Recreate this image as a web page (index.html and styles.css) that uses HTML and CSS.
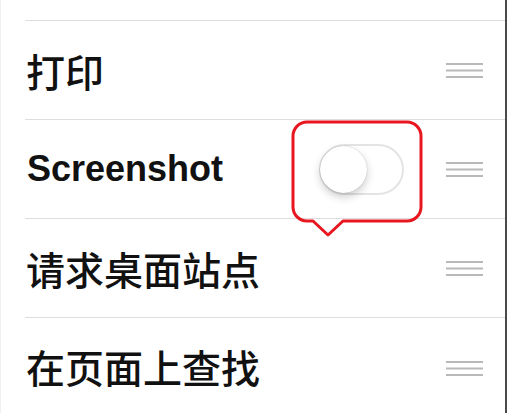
FILE: index.html
```html
<!DOCTYPE html>
<html lang="zh">
<head>
<meta charset="utf-8">
<link rel="stylesheet" href="styles.css">
</head>
<body>
<div class="screen">
  <div class="top"></div>
  <div class="row">
    <span class="label cjk">打印</span>
    <svg class="handle" width="37" height="15" viewBox="0 0 37 15"><path d="M0 1H37M0 7.5H37M0 14H37" stroke="#b9b9b9" stroke-width="1.8"/></svg>
  </div>
  <div class="row">
    <span class="label latin">Screenshot</span>
    <div class="toggle"><div class="knob"></div></div>
    <svg class="handle" width="37" height="15" viewBox="0 0 37 15"><path d="M0 1H37M0 7.5H37M0 14H37" stroke="#b9b9b9" stroke-width="1.8"/></svg>
  </div>
  <div class="row">
    <span class="label cjk">请求桌面站点</span>
    <svg class="handle" width="37" height="15" viewBox="0 0 37 15"><path d="M0 1H37M0 7.5H37M0 14H37" stroke="#b9b9b9" stroke-width="1.8"/></svg>
  </div>
  <div class="row last">
    <span class="label cjk">在页面上查找</span>
    <svg class="handle" width="37" height="15" viewBox="0 0 37 15"><path d="M0 1H37M0 7.5H37M0 14H37" stroke="#b9b9b9" stroke-width="1.8"/></svg>
  </div>
  <svg class="callout" width="138" height="122" viewBox="0 0 138 122"><path d="M19 5H119A14 14 0 0 1 133 19V90A14 14 0 0 1 119 104H55L40 118L25 104H19A14 14 0 0 1 5 90V19A14 14 0 0 1 19 5Z" fill="none" stroke="#e8161f" stroke-width="3" stroke-linejoin="round"/></svg>
</div>
</body>
</html>
```
FILE: styles.css
```css
html, body {
  margin: 0;
  padding: 0;
  background: #fff;
}
.screen {
  position: relative;
  width: 504px;
  height: 413px;
  overflow: hidden;
  border-left: 1px solid #f0f0f0;
  border-right: 2px solid #4a4a4a;
  background: #fff;
}
.top {
  height: 20px;
}
.row {
  margin-left: 24px;
  border-top: 1px solid #dddddd;
  height: 98px;
  display: flex;
  align-items: center;
  padding-left: 1px;
  padding-right: 22px;
}
.row.last {
  height: 120px;
  align-items: flex-start;
}
.row.last .label {
  margin-top: 29px;
}
.row.last .handle {
  margin-top: 43px;
}
.label {
  color: #111;
}
.cjk {
  font-family: "Noto Sans CJK SC", sans-serif;
  font-size: 39px;
  font-weight: 500;
  line-height: 1;
}
.latin {
  font-family: "Liberation Sans", Arial, sans-serif;
  font-size: 36px;
  font-weight: bold;
  line-height: 1;
  padding-left: 1px;
}
.handle {
  margin-left: auto;
  display: block;
}
.toggle {
  margin-left: auto;
  margin-right: 42px;
  width: 81px;
  height: 47px;
  border: 2px solid #e4e4e4;
  border-radius: 26px;
  background: #fff;
  display: flex;
  align-items: center;
}
.toggle + .handle {
  margin-left: 0;
}
.knob {
  width: 47px;
  height: 47px;
  margin-left: -1px;
  border-radius: 50%;
  background: #fff;
  box-shadow: 0 4px 9px rgba(0,0,0,0.2), 0 0 1px rgba(0,0,0,0.3);
}
.callout {
  position: absolute;
  left: 287px;
  top: 117px;
}
```
